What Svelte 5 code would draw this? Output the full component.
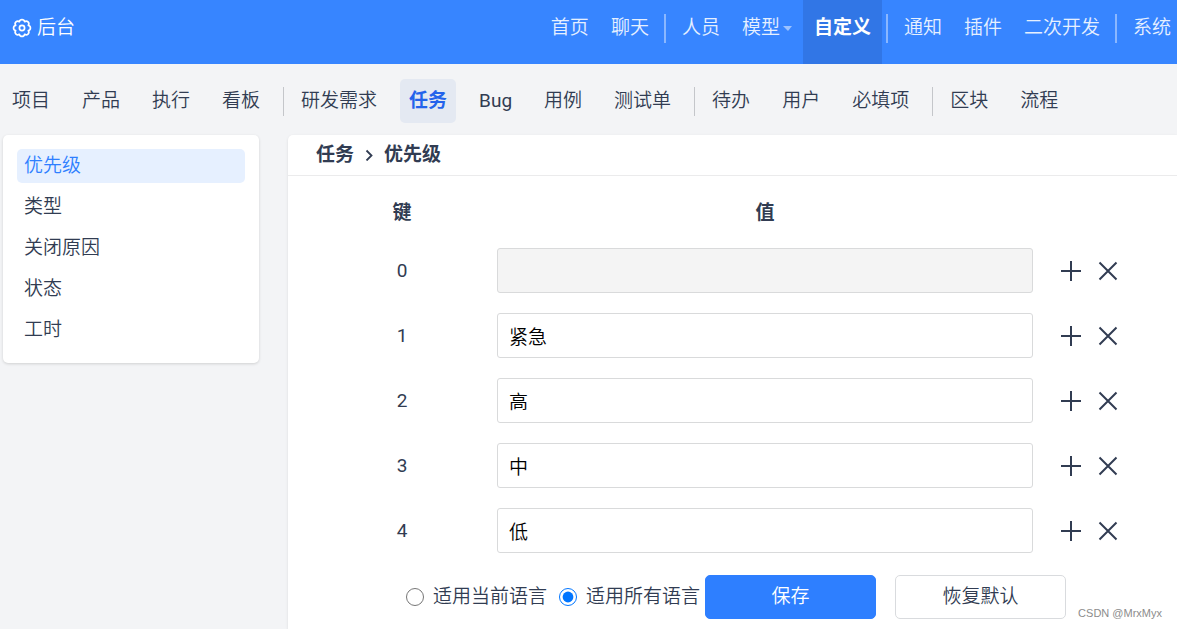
<!-- Admin page for editing the priority options of tasks. -->
<script lang="ts">
    type NavItem = { label: string; active?: boolean; caret?: boolean };

    const mainNav: NavItem[][] = [
        [{ label: "首页" }, { label: "聊天" }],
        [
            { label: "人员" },
            { label: "模型", caret: true },
            { label: "自定义", active: true },
        ],
        [{ label: "通知" }, { label: "插件" }, { label: "二次开发" }],
        [{ label: "系统" }],
    ];

    const subNav = [
        ["项目", "产品", "执行", "看板"],
        ["研发需求", "任务", "Bug", "用例", "测试单"],
        ["待办", "用户", "必填项"],
        ["区块", "流程"],
    ];

    const fields = ["优先级", "类型", "关闭原因", "状态", "工时"];

    const defaults = ["", "紧急", "高", "中", "低"];

    let currentModule = $state("任务");
    let currentField = $state("优先级");
    let scope = $state("all");
    let nextKey = defaults.length;
    let rows = $state(defaults.map((value, key) => ({ key, value })));

    function isLatin(label: string) {
        return /^[a-z]+$/i.test(label);
    }

    function addRow(index: number) {
        rows.splice(index + 1, 0, { key: nextKey++, value: "" });
    }

    function removeRow(index: number) {
        rows.splice(index, 1);
    }

    function restore() {
        rows = defaults.map((value, key) => ({ key, value }));
        nextKey = defaults.length;
    }
</script>

<div class="page">
    <header class="topbar">
        <a class="brand" href="#admin">
            <svg class="gear" viewBox="0 0 20 20" fill="none" stroke="currentColor" stroke-width="1.7" stroke-linejoin="round">
                <path
                    d="M7.4 3.7A2.65 2.65 0 0 1 12.6 3.7A2.65 2.65 0 0 1 16.3 7.4A2.65 2.65 0 0 1 16.3 12.6A2.65 2.65 0 0 1 12.6 16.3A2.65 2.65 0 0 1 7.4 16.3A2.65 2.65 0 0 1 3.7 12.6A2.65 2.65 0 0 1 3.7 7.4A2.65 2.65 0 0 1 7.4 3.7Z"
                />
                <circle cx="10" cy="10" r="2.6" />
            </svg>
            <span>后台</span>
        </a>
        <nav class="main-nav" aria-label="主导航">
            {#each mainNav as group, i}
                {#if i > 0}<span class="bar"></span>{/if}
                {#each group as item}
                    <a href="#nav" class:active={item.active}>
                        {item.label}{#if item.caret}<span class="caret"></span>{/if}
                    </a>
                {/each}
            {/each}
        </nav>
    </header>

    <nav class="sub-nav" aria-label="模块">
        {#each subNav as group, i}
            {#if i > 0}<span class="divider"></span>{/if}
            {#each group as label}
                <a
                    href="#module"
                    class:latin={isLatin(label)}
                    class:active={label === currentModule}
                    onclick={() => (currentModule = label)}>{label}</a
                >
            {/each}
        {/each}
    </nav>

    <div class="content">
        <aside class="side-menu">
            {#each fields as field}
                <a
                    href="#field"
                    class:active={field === currentField}
                    onclick={() => (currentField = field)}>{field}</a
                >
            {/each}
        </aside>

        <main class="panel">
            <h1 class="panel-heading">
                <span>{currentModule}</span>
                <svg class="chevron" viewBox="0 0 10 12" fill="none" stroke="currentColor" stroke-width="1.8">
                    <path d="M2.5 1.5L7.5 6.5L2.5 11.5" />
                </svg>
                <span>{currentField}</span>
            </h1>

            <form onsubmit={(e) => e.preventDefault()}>
                <table>
                    <thead>
                        <tr>
                            <th class="key-col">键</th>
                            <th>值</th>
                            <th class="action-col"></th>
                        </tr>
                    </thead>
                    <tbody>
                        {#each rows as row, i (row.key)}
                            <tr>
                                <td class="key-col">
                                    <label class="latin" for="value-{row.key}">{row.key}</label>
                                </td>
                                <td>
                                    <input
                                        id="value-{row.key}"
                                        class="value-input"
                                        type="text"
                                        bind:value={row.value}
                                        disabled={row.key === 0}
                                    />
                                </td>
                                <td class="action-col">
                                    <div class="row-actions">
                                        <button type="button" aria-label="添加" onclick={() => addRow(i)}>
                                            <svg viewBox="0 0 22 22" stroke="currentColor" stroke-width="2">
                                                <path d="M1 11H21M11 1V21" />
                                            </svg>
                                        </button>
                                        <button type="button" aria-label="删除" onclick={() => removeRow(i)}>
                                            <svg viewBox="0 0 22 22" stroke="currentColor" stroke-width="2">
                                                <path d="M2.5 2.5L19.5 19.5M19.5 2.5L2.5 19.5" />
                                            </svg>
                                        </button>
                                    </div>
                                </td>
                            </tr>
                        {/each}
                    </tbody>
                </table>

                <div class="form-footer">
                    <div class="scopes">
                        <label>
                            <input type="radio" name="scope" value="current" bind:group={scope} />
                            适用当前语言
                        </label>
                        <label>
                            <input type="radio" name="scope" value="all" bind:group={scope} />
                            适用所有语言
                        </label>
                    </div>
                    <div class="buttons">
                        <button type="submit" class="btn primary">保存</button>
                        <button type="button" class="btn" onclick={restore}>恢复默认</button>
                    </div>
                </div>
            </form>
        </main>
    </div>
    <span class="watermark">CSDN @MrxMyx</span>
</div>

<style>
    :global(body) {
        background: #f3f4f6;
    }

    .page {
        position: relative;
        display: flex;
        flex-direction: column;
        box-sizing: border-box;
        min-height: 100vh;
        overflow: hidden;
        color: #313c52;
        font-family: Roboto, "Noto Sans CJK SC", sans-serif;
        font-size: 19px;
        font-weight: 350;
        line-height: 28px;
    }

    a {
        color: inherit;
        text-decoration: none;
        white-space: nowrap;
    }

    .latin {
        font-weight: 400;
    }

    .topbar {
        display: flex;
        justify-content: space-between;
        height: 64px;
        background: #3785ff;
        color: #fff;
        line-height: 56px;
    }

    .brand {
        display: flex;
        gap: 5px;
        padding-left: 12px;
    }

    .gear {
        width: 20px;
        height: 20px;
        margin-top: 18px;
    }

    .main-nav {
        display: flex;
    }

    .main-nav a {
        padding: 0 11px;
        color: #e6f0ff;
    }

    .main-nav a:last-child {
        padding-right: 6px;
    }

    .main-nav .active {
        background: #3176e6;
        color: #fff;
        font-weight: 700;
    }

    .bar {
        width: 2px;
        height: 29px;
        margin: 14px 5px 0 4px;
        background: #8ab7ff;
    }

    .caret {
        display: inline-block;
        margin-left: 3px;
        border: solid transparent;
        border-width: 5px 4px 0 5px;
        border-top-color: #9bc2ff;
        vertical-align: middle;
    }

    .sub-nav {
        display: flex;
        align-items: center;
        padding: 15px 3px 12px;
        line-height: 44px;
    }

    .sub-nav a {
        margin-right: 14px;
        padding: 0 9px;
        border-radius: 5px;
    }

    .sub-nav .active {
        background: #e4e9f2;
        color: #2463eb;
        font-weight: 700;
    }

    .divider {
        width: 1px;
        height: 29px;
        margin-right: 8px;
        background: #c4c6ca;
    }

    .content {
        display: flex;
        flex: 1;
        align-items: flex-start;
        gap: 29px;
        padding-left: 3px;
    }

    .side-menu {
        display: flex;
        flex: none;
        flex-direction: column;
        gap: 7px;
        box-sizing: border-box;
        width: 256px;
        padding: 14px 14px 16px;
        border-radius: 5px;
        background: #fff;
        box-shadow: 0 1px 3px rgba(0, 0, 0, 0.15);
    }

    .side-menu a {
        padding: 0 7px;
        border-radius: 5px;
        line-height: 34px;
    }

    .side-menu .active {
        background: #e6f0ff;
        color: #2e7fff;
    }

    .panel {
        flex: 1;
        align-self: stretch;
        min-width: 0;
        border-radius: 5px 0 0;
        background: #fff;
        box-shadow: 0 1px 3px rgba(0, 0, 0, 0.1);
    }

    .panel-heading {
        display: flex;
        align-items: center;
        gap: 10px;
        margin: 0;
        padding-left: 28px;
        border-bottom: 1px solid #ebebec;
        font-size: 19px;
        line-height: 40px;
    }

    .chevron {
        width: 10px;
        height: 12px;
    }

    form {
        padding: 12px 0 10px 19px;
    }

    table {
        width: 100%;
        border-collapse: collapse;
        table-layout: fixed;
    }

    th,
    td {
        padding: 0;
        text-align: center;
    }

    th {
        height: 50px;
        font-weight: 700;
    }

    td {
        height: 65px;
    }

    .key-col {
        width: 190px;
    }

    .action-col {
        width: 144px;
    }

    .value-input {
        display: block;
        box-sizing: border-box;
        width: 100%;
        height: 45px;
        padding: 0 11px;
        border: 1px solid #d9dadb;
        border-radius: 3px;
        background: #fff;
        color: #000;
        font: inherit;
    }

    .value-input:disabled {
        background: #f4f4f4;
    }

    .row-actions {
        display: flex;
        gap: 15px;
        padding-left: 27px;
    }

    .row-actions button {
        padding: 0;
        border: 0;
        background: none;
        color: inherit;
        cursor: pointer;
    }

    .row-actions svg {
        display: block;
        width: 22px;
        height: 22px;
    }

    .form-footer {
        display: flex;
        align-items: center;
        gap: 5px;
        margin-top: 12px;
        padding-left: 99px;
    }

    .scopes {
        display: flex;
        gap: 12px;
        white-space: nowrap;
    }

    .scopes label {
        display: flex;
        align-items: center;
        gap: 9px;
    }

    .scopes input {
        width: 18px;
        height: 18px;
        margin: 0;
    }

    .buttons {
        display: flex;
        gap: 19px;
    }

    .btn {
        width: 171px;
        height: 44px;
        border: 1px solid #d9dbde;
        border-radius: 5px;
        background: #fff;
        color: inherit;
        font: inherit;
        cursor: pointer;
    }

    .primary {
        border-color: #2e7fff;
        background: #2e7fff;
        color: #fff;
    }

    .watermark {
        position: absolute;
        right: 15px;
        bottom: 8px;
        color: #8c8c8c;
        font-family: "Liberation Sans", sans-serif;
        font-size: 11px;
        font-weight: 400;
        line-height: 16px;
    }
</style>
